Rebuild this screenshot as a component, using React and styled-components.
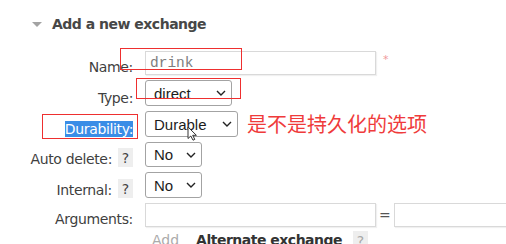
import styled, { createGlobalStyle } from 'styled-components'

const GlobalStyle = createGlobalStyle`
  html, body {
    margin: 0;
    padding: 0;
    background: #fff;
    overflow: hidden;
  }
  body {
    font-family: "DejaVu Sans", Verdana, sans-serif;
    font-size: 14px;
    color: #444;
  }
`

const Chevron = () => (
  <svg width="10" height="6" viewBox="0 0 10 6">
    <path d="M1 1 L5 5 L9 1" fill="none" stroke="#222" strokeWidth="1.4" />
  </svg>
)

const Cursor = () => (
  <svg width="11" height="15" viewBox="0 0 11 15">
    <path
      d="M1 1 L1 12.5 L3.8 10 L6 14.2 L7.8 13.4 L5.7 9.3 L9.4 9.3 Z"
      fill="#fff"
      stroke="#333"
      strokeWidth="1"
      strokeLinejoin="round"
    />
  </svg>
)

const Picker = ({ value, width, height = 26 }) => (
  <Select $w={width} $h={height}>
    <span>{value}</span>
    <Chevron />
  </Select>
)

const App = () => (
  <Page>
    <GlobalStyle />
    <Header>
      <Toggle />
      <Title>Add a new exchange</Title>
    </Header>

    <Form>
      <Label>Name:</Label>
      <Field>
        <TextInput value="drink" readOnly />
        <Required>*</Required>
      </Field>

      <Label>Type:</Label>
      <Field>
        <Picker value="direct" width={87} />
      </Field>

      <Label>
        <Selected>Durability:</Selected>
      </Label>
      <Field>
        <Picker value="Durable" width={93} />
        <Note>是不是持久化的选项</Note>
      </Field>

      <Label>
        <span>Auto delete:</span>
        <Help>?</Help>
      </Label>
      <Field>
        <Picker value="No" width={57} height={25} />
      </Field>

      <Label>
        <span>Internal:</span>
        <Help>?</Help>
      </Label>
      <Field>
        <Picker value="No" width={57} />
      </Field>

      <Label>Arguments:</Label>
      <Field>
        <TextInput readOnly tabIndex={-1} />
        <Equals>=</Equals>
        <TextInput readOnly tabIndex={-1} $w={140} />
      </Field>

      <span />
      <AddRow>
        <AddLink>Add</AddLink>
        <AltLabel>Alternate exchange</AltLabel>
        <Help $faint>?</Help>
      </AddRow>
    </Form>

    <Mark $x={120} $y={48} $w={122} $h={22} />
    <Mark $x={136} $y={78} $w={105} $h={21} />
    <Mark $x={42} $y={114} $w={96} $h={25} />
    <Pointer>
      <Cursor />
    </Pointer>
  </Page>
)

export default App

const Page = styled.div`
  position: relative;
  width: 506px;
  height: 244px;
  overflow: hidden;
`

const Header = styled.div`
  display: flex;
  align-items: center;
  gap: 10px;
  height: 48px;
  padding-left: 32px;
`

const Toggle = styled.span`
  width: 0;
  height: 0;
  border-left: 5.5px solid transparent;
  border-right: 5.5px solid transparent;
  border-top: 5px solid #a3a3a3;
`

const Title = styled.h2`
  margin: 0;
  font-size: 14px;
  font-weight: 700;
  letter-spacing: -0.5px;
  color: #474747;
`

const Form = styled.div`
  display: grid;
  grid-template-columns: 133px max-content;
  column-gap: 12px;
  row-gap: 5px;
  padding-top: 3px;
`

const Label = styled.div`
  display: flex;
  justify-content: flex-end;
  align-items: flex-end;
  gap: 6px;
  line-height: 16px;
  letter-spacing: -0.35px;
  white-space: nowrap;
  color: #3f3f3f;
`

const Selected = styled.span`
  background: #3a8de6;
  color: #fff;
`

const Help = styled.span`
  display: inline-flex;
  align-items: center;
  justify-content: center;
  width: 15px;
  height: 19px;
  background: #eeeeee;
  color: ${(p) => (p.$faint ? '#a8a8a8' : '#444')};
  letter-spacing: 0;
  margin-left: ${(p) => (p.$faint ? '11px' : '0')};
  margin-top: ${(p) => (p.$faint ? '-1px' : '0')};
`

const Field = styled.div`
  display: flex;
  align-items: center;
`

const TextInput = styled.input`
  box-sizing: border-box;
  width: ${(p) => p.$w || 231}px;
  height: 24px;
  margin: 0;
  padding: 0 4px;
  border: 1px solid #d9d9d9;
  box-shadow: 1px 1px 1px rgba(0, 0, 0, 0.06);
  background: #fff;
  font-family: "Liberation Mono", "Courier New", monospace;
  font-size: 14.5px;
  color: #7d7d7d;
  outline: none;
`

const Required = styled.span`
  align-self: flex-start;
  margin: 2px 0 0 7px;
  font-size: 11px;
  color: #f09a9a;
`

const Equals = styled.span`
  margin: 0 3px;
  color: #555;
`

const Select = styled.div`
  box-sizing: border-box;
  display: flex;
  align-items: center;
  justify-content: space-between;
  width: ${(p) => p.$w}px;
  height: ${(p) => p.$h}px;
  padding: 0 5px 0 8px;
  border: 1px solid #a3a3a3;
  border-radius: 3px;
  background: #fff;
  font-family: "Liberation Sans", Arial, sans-serif;
  font-size: 15px;
  color: #1c1c1c;
`

const Note = styled.span`
  margin-left: 9px;
  font-family: "Noto Sans CJK SC", sans-serif;
  font-size: 20px;
  line-height: 1;
  color: #ef3b3b;
`

const AddRow = styled.div`
  display: flex;
  align-items: flex-start;
  line-height: 16px;
`

const AddLink = styled.span`
  margin-left: 7px;
  color: #ababab;
`

const AltLabel = styled.span`
  margin-left: 17px;
  font-weight: 700;
  letter-spacing: -0.5px;
  color: #333;
`

const Mark = styled.div`
  position: absolute;
  left: ${(p) => p.$x}px;
  top: ${(p) => p.$y}px;
  width: ${(p) => p.$w}px;
  height: ${(p) => p.$h}px;
  border: 1px solid #ee2f2f;
  box-sizing: border-box;
  pointer-events: none;
`

const Pointer = styled.div`
  position: absolute;
  left: 187px;
  top: 126px;
  line-height: 0;
`
